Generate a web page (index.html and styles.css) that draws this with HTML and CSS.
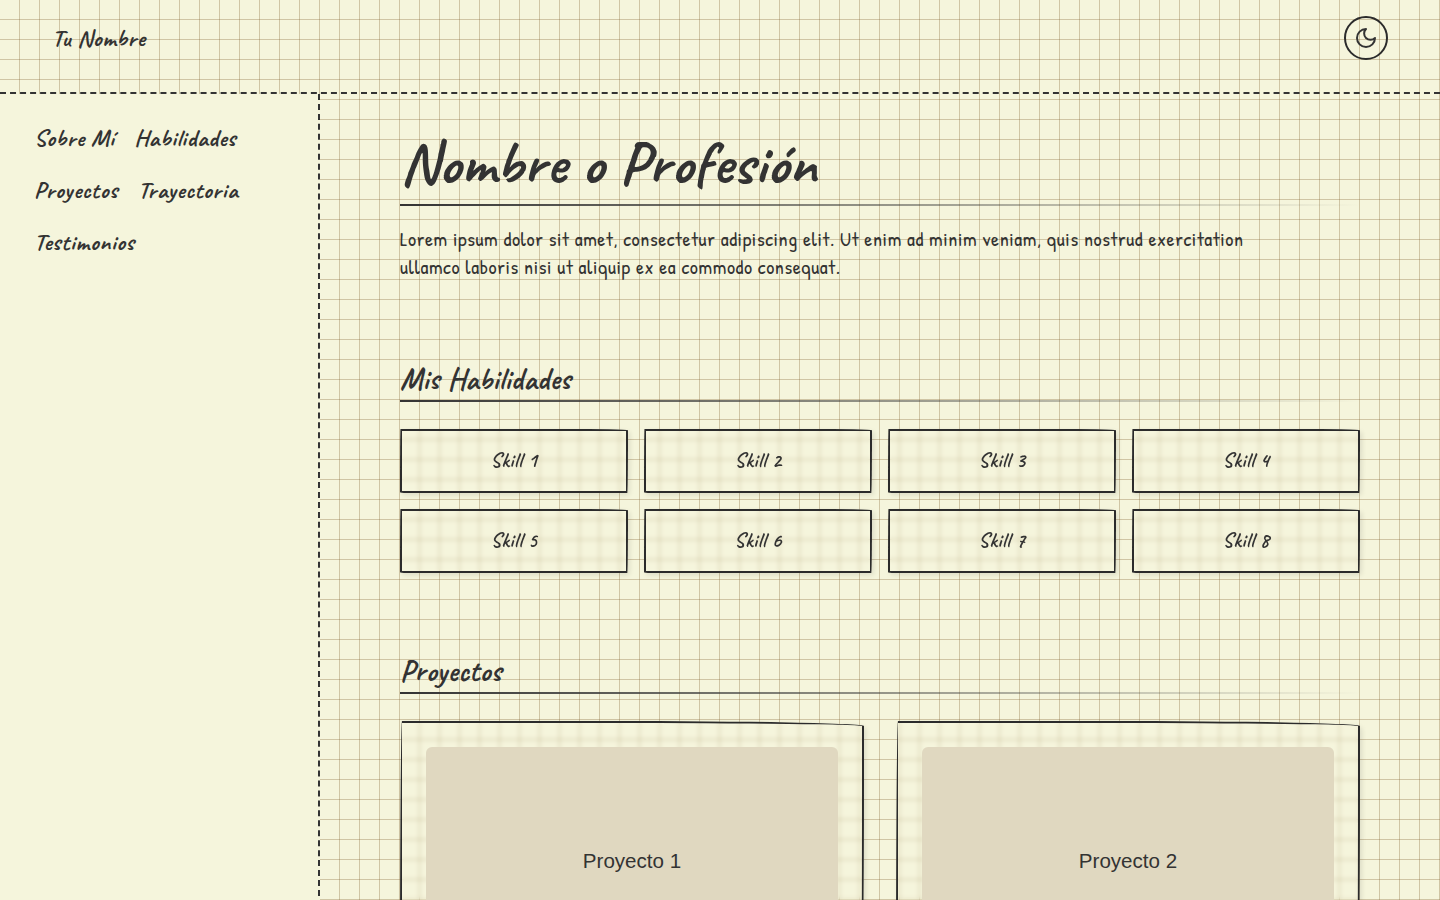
FILE: index.html
```
<!DOCTYPE html>
<html lang="es">
<head>
    <meta charset="UTF-8">
    <meta name="viewport" content="width=device-width, initial-scale=1.0">
    <title>Tu Nombre</title>
    <link rel="stylesheet" href="styles.css">
</head>
<body>
    <header class="header">
        <a class="logo" href="#sobre-mi">Tu Nombre</a>
        <button class="theme-toggle" type="button" aria-label="Cambiar tema">
            <svg width="24" height="24" viewBox="0 0 24 24" fill="none" stroke="currentColor" stroke-width="2" stroke-linecap="round" stroke-linejoin="round">
                <path d="M12 3a6 6 0 0 0 9 9 9 9 0 1 1-9-9Z"/>
            </svg>
        </button>
    </header>

    <div class="layout">
        <nav class="sidebar">
            <a href="#sobre-mi">Sobre Mí</a>
            <a href="#habilidades">Habilidades</a>
            <a href="#proyectos">Proyectos</a>
            <a href="#trayectoria">Trayectoria</a>
            <a href="#testimonios">Testimonios</a>
        </nav>

        <main class="content">
            <section id="sobre-mi" class="intro">
                <h1>Nombre o Profesión</h1>
                <p>Lorem ipsum dolor sit amet, consectetur adipiscing elit. Ut enim ad minim veniam, quis nostrud exercitation ullamco laboris nisi ut aliquip ex ea commodo consequat.</p>
            </section>

            <section id="habilidades">
                <h2>Mis Habilidades</h2>
                <div class="skills">
                    <div class="skill">Skill 1</div>
                    <div class="skill">Skill 2</div>
                    <div class="skill">Skill 3</div>
                    <div class="skill">Skill 4</div>
                    <div class="skill">Skill 5</div>
                    <div class="skill">Skill 6</div>
                    <div class="skill">Skill 7</div>
                    <div class="skill">Skill 8</div>
                </div>
            </section>

            <section id="proyectos">
                <h2>Proyectos</h2>
                <div class="projects">
                    <article class="project">
                        <svg class="project-image" viewBox="0 0 400 225">
                            <text x="200" y="117">Proyecto 1</text>
                        </svg>
                    </article>
                    <article class="project">
                        <svg class="project-image" viewBox="0 0 400 225">
                            <text x="200" y="117">Proyecto 2</text>
                        </svg>
                    </article>
                </div>
            </section>
        </main>
    </div>
</body>
</html>
```
FILE: styles.css
```
:root {
    --paper: #f5f5dc;
    --ink: #333;
    --border: #2b2b2b;
    --grid: rgba(139, 109, 60, 0.35);
    --title-font: "Caveat", "Lato", "Liberation Sans", cursive;
    --text-font: "Patrick Hand", "Lato", "Liberation Sans", cursive;
}
* {
    box-sizing: border-box;
}
body {
    margin: 0;
    min-height: 100vh;
    display: flex;
    flex-direction: column;
    color: var(--ink);
    font-family: var(--text-font);
    letter-spacing: 0.6px;
    background-color: var(--paper);
    background-image:
        linear-gradient(transparent 19px, var(--grid) 19px),
        linear-gradient(90deg, transparent 19px, var(--grid) 19px);
    background-size: 20px 20px;
}
a {
    color: inherit;
    text-decoration: none;
}
.header {
    display: flex;
    justify-content: space-between;
    align-items: center;
    padding: 16px 52px 32px;
    border-bottom: 2px dashed var(--ink);
}
.logo,
.sidebar,
.skill,
h1,
h2 {
    font-family: var(--title-font);
    font-weight: 700;
}
.logo {
    font-size: 24px;
}
.theme-toggle {
    display: flex;
    align-items: center;
    justify-content: center;
    width: 44px;
    height: 44px;
    padding: 0;
    border: 2px solid var(--border);
    border-radius: 50%;
    background: none;
    color: var(--ink);
    cursor: pointer;
}
.layout {
    display: flex;
    flex: 1;
}
.sidebar {
    display: flex;
    flex-wrap: wrap;
    align-content: flex-start;
    gap: 24px 20px;
    width: 320px;
    padding: 30px 34px;
    border-right: 2px dashed var(--ink);
    background-color: var(--paper);
    font-size: 24px;
    line-height: 28px;
}
.content {
    flex: 1;
    padding: 36px 80px 80px;
}
h1,
h2 {
    margin: 0;
    border-bottom: 2px solid;
    border-image: linear-gradient(90deg, var(--ink), transparent) 1;
    letter-spacing: 0.4px;
}
h1 {
    padding-bottom: 8px;
    font-size: 61px;
    line-height: 66px;
}
h2 {
    margin-bottom: 27px;
    padding-bottom: 2px;
    font-size: 30px;
    line-height: 38px;
}
.intro p {
    max-width: 880px;
    margin: 19px 0 0;
    font-size: 20px;
    line-height: 28px;
}
section + section {
    padding-top: 79px;
}
.skills {
    display: grid;
    grid-template-columns: repeat(4, 1fr);
    gap: 16px;
}
.skill,
.project {
    border: 2px solid var(--border);
    border-radius: 2px 255px 3px 25px / 255px 5px 225px 3px;
    box-shadow: 2px 2px 5px rgba(0, 0, 0, 0.1);
    backdrop-filter: blur(2px);
}
.skill {
    padding: 16px;
    font-size: 20px;
    line-height: 28px;
    font-weight: 600;
    text-align: center;
}
.projects {
    display: grid;
    grid-template-columns: repeat(2, 1fr);
    gap: 32px;
}
.project {
    padding: 24px;
}
.project-image {
    display: block;
    width: 100%;
    border-radius: 6px;
    background-color: #e0d8c0;
}
.project-image text {
    fill: var(--ink);
    font-family: "Liberation Sans", Arial, sans-serif;
    font-size: 20px;
    letter-spacing: 0;
    text-anchor: middle;
}
@media (max-width: 768px) {
    .layout {
        flex-direction: column;
    }
    .sidebar {
        width: 100%;
        border-right: none;
    }
    .content {
        padding: 32px 24px;
    }
    .skills,
    .projects {
        grid-template-columns: 1fr;
    }
}
```
